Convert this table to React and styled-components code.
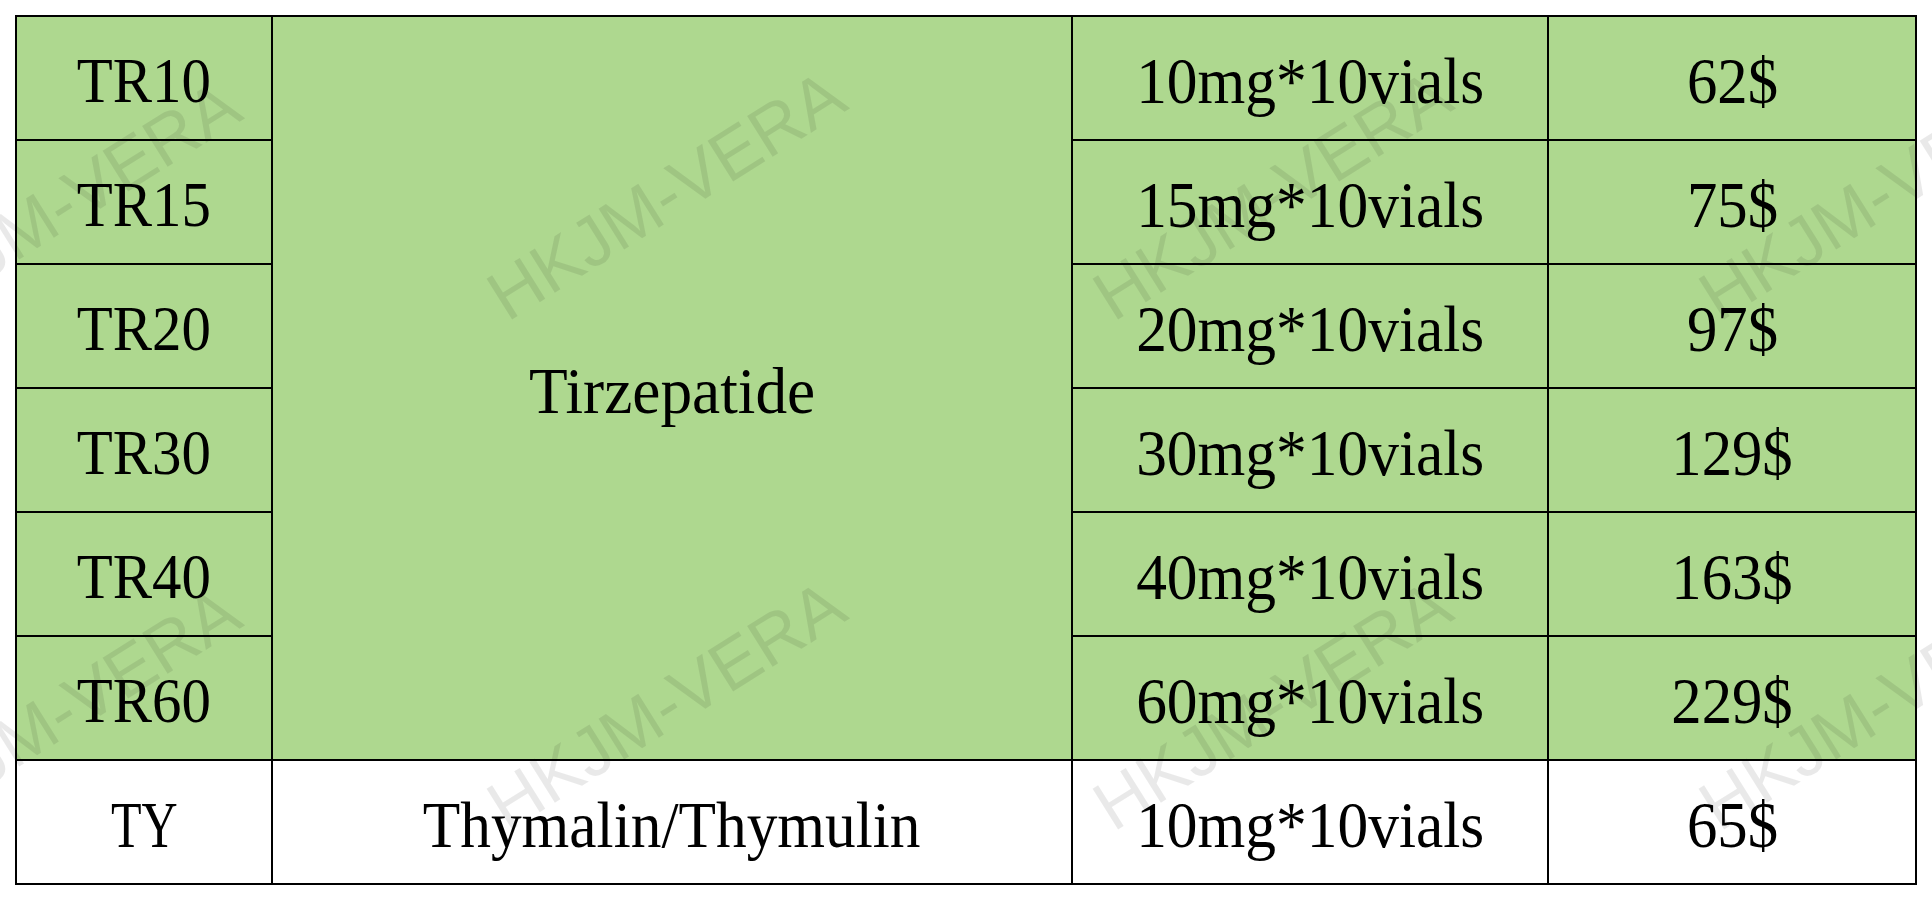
import React from 'react'
import styled, { createGlobalStyle } from 'styled-components'

const GREEN = '#aed88f'

const GlobalStyle = createGlobalStyle`
  html, body {
    margin: 0;
    padding: 0;
    background: #fff;
  }
`

const Page = styled.div`
  position: relative;
  width: 1932px;
  height: 900px;
  overflow: hidden;
  padding: 15px 0 0 15px;
  box-sizing: border-box;
  background: #fff;
`

const PriceGrid = styled.div`
  display: grid;
  grid-template-columns: 254px 798px 474px 366px;
  grid-template-rows: repeat(7, 122px);
  gap: 2px;
  padding: 2px;
  width: fit-content;
  background: #000;
`

const Cell = styled.div`
  display: flex;
  align-items: center;
  justify-content: center;
  padding-top: 6px;
  box-sizing: border-box;
  background: ${p => (p.$green ? GREEN : '#fff')};
  grid-row: ${p => (p.$span ? `span ${p.$span}` : 'auto')};
  overflow: hidden;
`

const Label = styled.span`
  display: inline-block;
  font-family: "Liberation Serif", "Times New Roman", serif;
  font-size: ${p => p.$size}px;
  line-height: normal;
  color: #000;
  white-space: nowrap;
  transform: scaleX(${p => p.$squeeze});
`

const Overlay = styled.div`
  position: absolute;
  inset: 0;
  pointer-events: none;
`

const Mark = styled.span`
  position: absolute;
  left: ${p => p.$x}px;
  top: ${p => p.$y}px;
  transform: translate(-50%, -50%) rotate(-32deg);
  font-family: "Liberation Sans", Arial, sans-serif;
  font-size: 70px;
  color: rgba(0, 0, 0, 0.085);
  white-space: nowrap;
`

const tirzepatide = [
  { code: 'TR10', dose: '10mg*10vials', price: '62$' },
  { code: 'TR15', dose: '15mg*10vials', price: '75$' },
  { code: 'TR20', dose: '20mg*10vials', price: '97$' },
  { code: 'TR30', dose: '30mg*10vials', price: '129$' },
  { code: 'TR40', dose: '40mg*10vials', price: '163$' },
  { code: 'TR60', dose: '60mg*10vials', price: '229$' }
]

const marks = [
  { x: 61, y: 205 }, { x: 666, y: 195 }, { x: 1272, y: 195 }, { x: 1878, y: 195 },
  { x: 61, y: 712 }, { x: 666, y: 705 }, { x: 1272, y: 705 }, { x: 1878, y: 705 }
]

export default function App () {
  return (
    <Page>
      <GlobalStyle />
      <PriceGrid>
        {tirzepatide.map((row, i) => (
          <React.Fragment key={row.code}>
            <Cell $green>
              <Label $size={64} $squeeze={0.92}>{row.code}</Label>
            </Cell>
            {i === 0 && (
              <Cell $green $span={6}>
                <Label $size={66} $squeeze={0.96}>Tirzepatide</Label>
              </Cell>
            )}
            <Cell $green>
              <Label $size={65} $squeeze={0.945}>{row.dose}</Label>
            </Cell>
            <Cell $green>
              <Label $size={66} $squeeze={0.92}>{row.price}</Label>
            </Cell>
          </React.Fragment>
        ))}
        <Cell>
          <Label $size={65} $squeeze={0.77}>TY</Label>
        </Cell>
        <Cell>
          <Label $size={66} $squeeze={0.93}>Thymalin/Thymulin</Label>
        </Cell>
        <Cell>
          <Label $size={65} $squeeze={0.945}>10mg*10vials</Label>
        </Cell>
        <Cell>
          <Label $size={66} $squeeze={0.92}>65$</Label>
        </Cell>
      </PriceGrid>
      <Overlay>
        {marks.map((m, i) => (
          <Mark key={i} $x={m.x} $y={m.y}>HKJM-VERA</Mark>
        ))}
      </Overlay>
    </Page>
  )
}
